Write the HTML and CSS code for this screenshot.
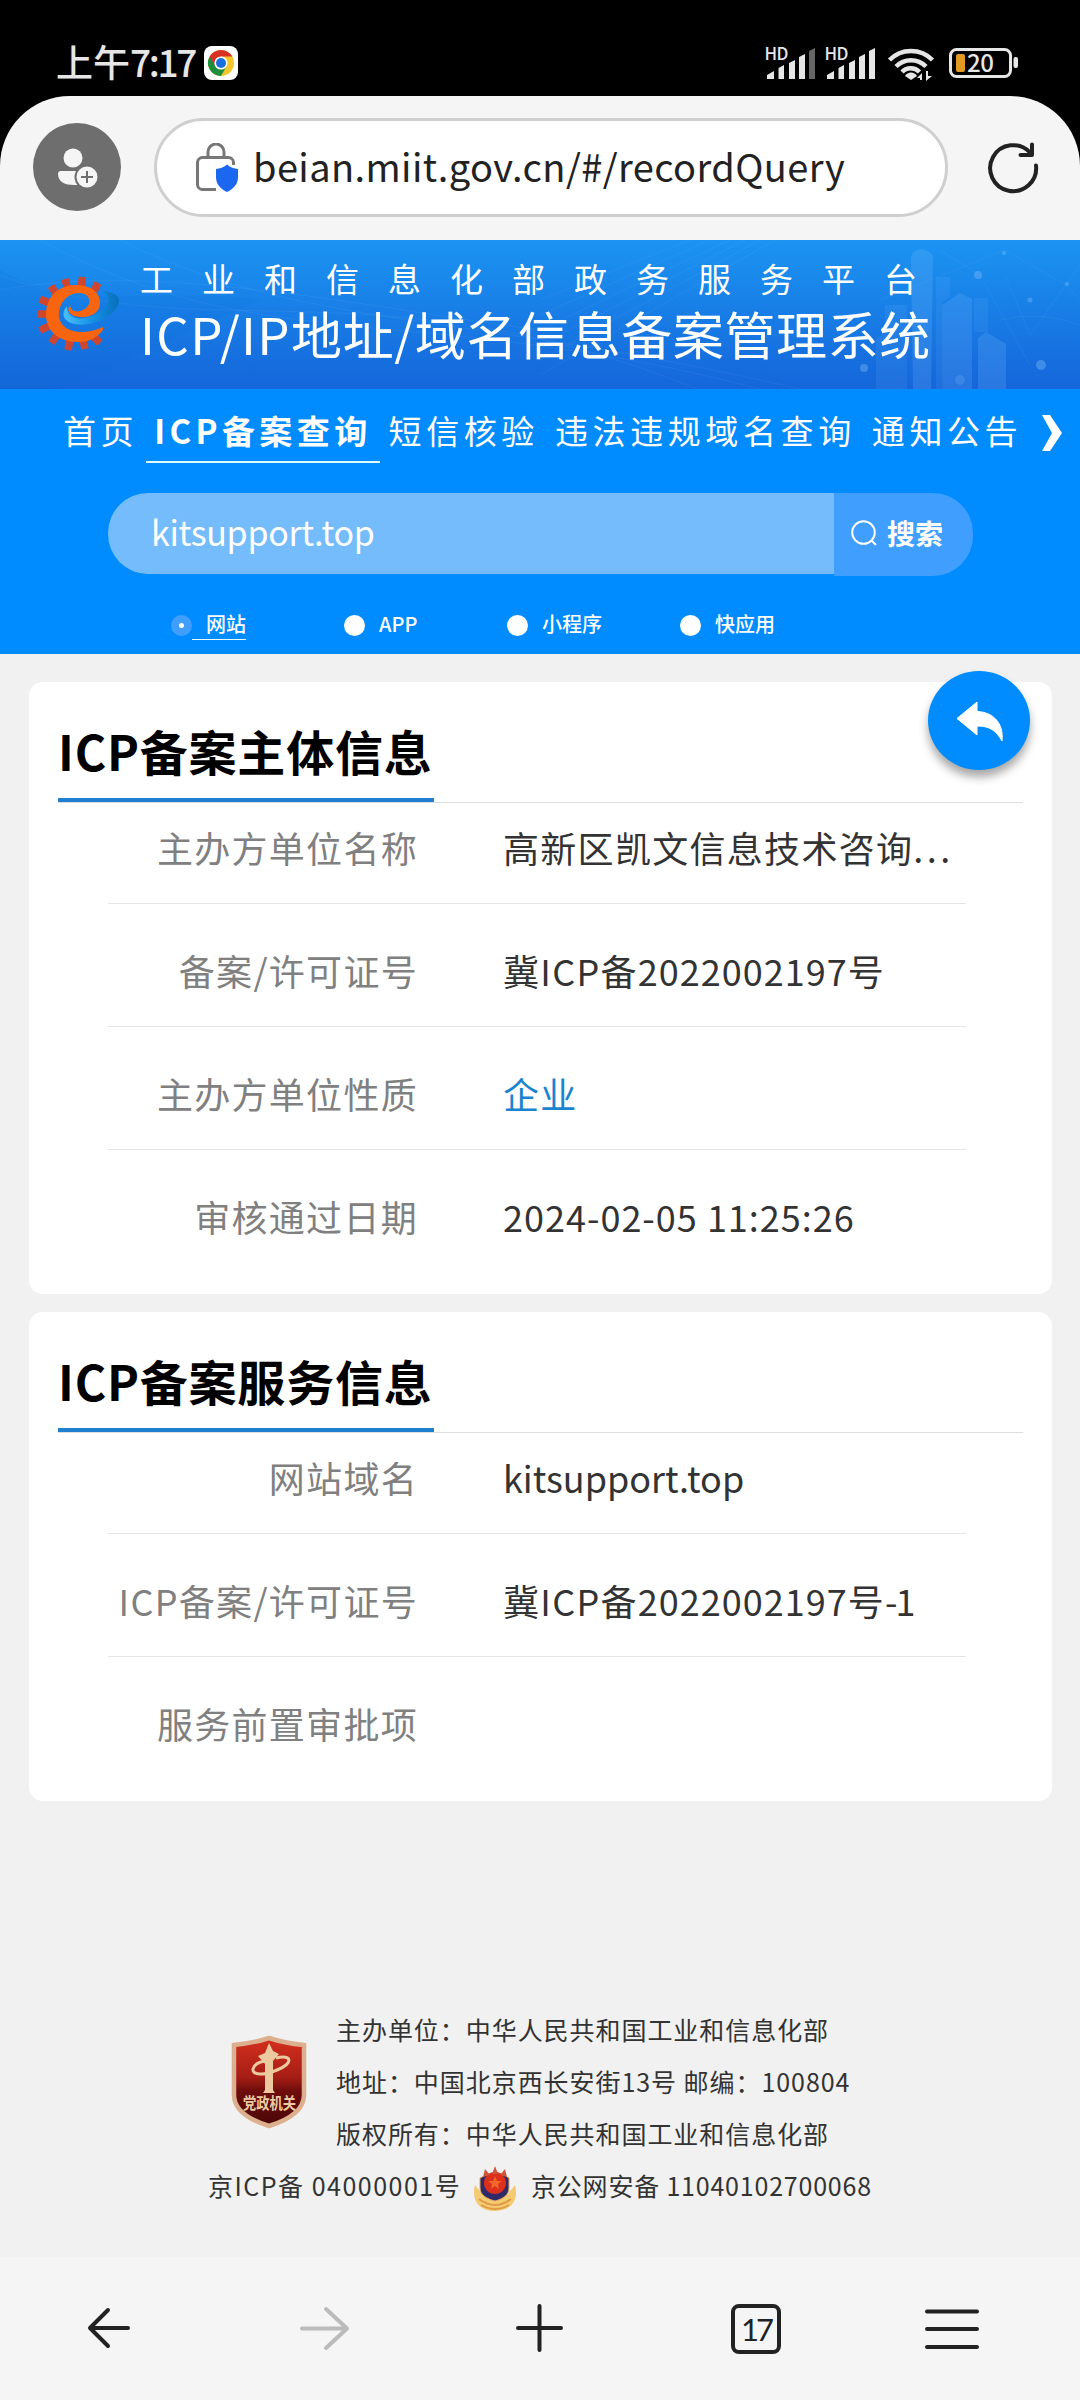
FILE: index.html
```
<!DOCTYPE html>
<html lang="zh-CN">
<head>
    <meta charset="UTF-8">
    <meta name="viewport" content="width=device-width, initial-scale=1.0">
    <title>ICP/IP地址/域名信息备案管理系统</title>
    <link rel="stylesheet" href="styles.css">
</head>
<body>
    <!-- Phone status bar -->
    <div class="status-bar">
        <span class="clock">上午<span class="clock-num">7:17</span></span>
        <svg class="chrome" width="34" height="34" viewBox="0 0 34 34">
            <rect width="34" height="34" rx="8" fill="#fff"/>
            <circle cx="17" cy="17" r="13" fill="#f5c52c"/>
            <path d="M17 17 L5.7 10.5 A13 13 0 0 0 17 30 L22.6 20.2z" fill="#1e8e3e"/>
            <path d="M17 17 L11.4 20.2 L5.7 10.5 A13 13 0 0 1 28.3 10.5 H17z" fill="#d93025"/>
            <circle cx="17" cy="17" r="6.6" fill="#fff"/>
            <circle cx="17" cy="17" r="5" fill="#1a6fe0"/>
        </svg>
        <svg class="status-icons" width="260" height="60" viewBox="760 33 260 60">
            <g fill="#e6e6e6">
                <text class="hd" x="764.5" y="59.5" textLength="24">HD</text>
                <path d="M767 79v-4l7-4v8zM778.500 79V68l5.500-3v14zM789 79V63l6-3v19zM799 79V57l6-3v25z"/>
                <path d="M809 79V51l6-3v31z" fill="#666"/>
                <text class="hd" x="824.5" y="59.5" textLength="24">HD</text>
                <path d="M827 79v-4l7-4v8zM838.500 79V68l5.500-3v14zM849 79V63l6-3v19zM859 79V57l6-3v25zM869 79V51l6-3v31z"/>
                <path d="M905 76l6 4 6-4a7 7 0 0 0-12 0z"/>
                <path d="M922 73l-5 5h3v2h2zM926 81V71h2v5h4z"/>
                <rect x="1013.500" y="57" width="4.500" height="11" rx="2"/>
                <text class="battery-num" x="967" y="72" textLength="27">20</text>
            </g>
            <g fill="none" stroke="#e6e6e6" stroke-width="4.500">
                <path d="M889.500 60a30 30 0 0 1 43 0M896 66.500a21 21 0 0 1 30 0M902 72a12 12 0 0 1 17.500 0"/>
                <rect x="950.500" y="49.500" width="60" height="27" rx="6" stroke-width="3"/>
            </g>
            <rect x="956" y="54" width="9" height="18" rx="2" fill="#e39a22"/>
        </svg>
    </div>

    <!-- Browser toolbar -->
    <div class="toolbar-wrap">
        <div class="toolbar">
            <svg class="avatar" width="88" height="88" viewBox="0 0 88 88">
                <circle cx="44" cy="44" r="44" fill="#6e6e6e"/>
                <circle cx="40" cy="35" r="9.500" fill="#f5f5f5"/>
                <path d="M25 51q0-3 3-3h24v14h-11c-9 0-16-3-16-11z" fill="#f5f5f5"/>
                <circle cx="54" cy="54" r="11.500" fill="#f5f5f5" stroke="#6e6e6e" stroke-width="2"/>
                <path d="M54 48v12M48 54h12" stroke="#6e6e6e" stroke-width="2"/>
            </svg>
            <div class="url-box">
                <svg width="44" height="50" viewBox="0 0 44 50">
                    <path d="M37.500 22v-2.500a5 5 0 0 0-5-5H6.500a5 5 0 0 0-5 5v22a5 5 0 0 0 5 5H20M12 14v-5a8 8 0 0 1 16 0v5" fill="none" stroke="#777" stroke-width="3"/>
                    <path d="M31 21.500c3.500 3 7 4 11 4.500v8c0 7-4 11.500-11 15-7-3.500-11-8-11-15v-8c4-.5 7.500-1.500 11-4.500z" fill="#1c67f0"/>
                </svg>
                <span class="url">beian.miit.gov.cn/#/recordQuery</span>
            </div>
            <svg class="reload" width="54" height="54" viewBox="0 0 54 54">
                <path d="M49 24.500A23 23 0 1 1 43 11.500M45 3.500V14H33.500" fill="none" stroke="#222" stroke-width="4" stroke-linecap="round" stroke-linejoin="round"/>
            </svg>
        </div>
    </div>

    <!-- Site header -->
    <div class="site-header">
        <svg class="header-bg" width="1080" height="149" viewBox="0 0 1080 149">
            <g fill="none" stroke="#fff" stroke-opacity=".05">
                <path d="M0 35C200 110 380 20 700 150M40 0C260 120 420 60 760 149M120 0C300 90 460 70 800 149M0 50C160 20 380 70 540 90"/>
                <path d="M540 60L690 0M540 75L710 0M540 90L730 0M540 105L745 0M540 120L760 0M540 135L775 0"/>
                <path d="M880 60L1005 10 1066 45 1080 60M1005 35l25 60 50-70M940 10l40 25 50 90M1000 80q40-10 80 5"/>
            </g>
            <path d="M0 30C80 75 160 45 260 60L60 149H0z" fill="#0b6ad8" opacity=".12"/>
            <g fill="#8cc5ff">
                <path d="M911 18q0-8 11-9 11 3 11 9l-2 131h-18z" opacity=".18"/>
                <path d="M942 65l18-12 12 6v90h-30z" opacity=".17"/>
                <path d="M978 98l8-6 20 12v45h-28z" opacity=".18"/>
                <path d="M885 65h22v84h-31v-50l9-6z" opacity=".1"/>
                <path d="M936 37h14v20l-8 5v87h-6zM974 58h14v34h-14z" opacity=".1"/>
                <g opacity=".35">
                    <circle cx="864" cy="128" r="4"/>
                    <circle cx="978" cy="35" r="4"/>
                    <circle cx="1041" cy="125" r="5"/>
                    <circle cx="1004" cy="13" r="2"/>
                    <circle cx="1030" cy="60" r="2.500"/>
                    <circle cx="1067" cy="44" r="2"/>
                    <circle cx="960" cy="140" r="5" opacity=".5"/>
                </g>
            </g>
        </svg>
        <svg class="logo" width="86" height="78" viewBox="0 0 86 78">
            <defs>
                <linearGradient id="swoosh" x1="0" y1="0" x2="1" y2="0">
                    <stop offset="0" stop-color="#4cc0fa"/>
                    <stop offset=".5" stop-color="#1591e6"/>
                    <stop offset="1" stop-color="#0670bd"/>
                </linearGradient>
            </defs>
            <path d="M58 16L62 8M45 14L46.500 2M32 15L29 4M21 20L15 11M13 28L4 24M11 39H2M13 51L4 55.500M21 60L15.500 68M34 65L32 75M47 65L49 74M57 61L64 68" stroke="#cf4630" stroke-width="7.500"/>
            <path d="M67 16C86 18 87 28 76 38 64 49 46 52 35 48 27 45 25 38 31 31 31 45 46 46 58 40 72 34 77 25 67 16z" fill="url(#swoosh)"/>
            <path d="M67 55C60 64 52 67 42 67 22 67 10 55 10 40 10 22 22 10 40 10 56 10 64 18 64 28 64 38 54 43 43 42 34 41 30 36 34 30 35 38 44 38 50 33 57 27 53 18 43 18 30 18 22 30 23 42 25 56 45 62 67 52z" fill="#f8650e"/>
        </svg>
        <div class="titles">
            <div class="title-small">工业和信息化部政务服务平台</div>
            <div class="title-big"><span class="title-latin">ICP/IP</span>地址/域名信息备案管理系统</div>
        </div>
    </div>

    <!-- Nav and search -->
    <div class="nav-area">
        <div class="nav">
            <span class="nav-item">首页</span>
            <span class="nav-item active">ICP备案查询</span>
            <span class="nav-item">短信核验</span>
            <span class="nav-item">违法违规域名查询</span>
            <span class="nav-item">通知公告</span>
            <svg class="chevron" width="22" height="36" viewBox="0 0 22 36">
                <path d="M1 0h8l12 18L9 36H1l10-18z" fill="#fff"/>
            </svg>
        </div>
        <div class="search">
            <div class="search-input">kitsupport.top</div>
            <div class="search-btn">
                <svg width="26" height="26" viewBox="0 0 26 26" fill="none" stroke="#fff" stroke-width="2">
                    <circle cx="12.500" cy="12.500" r="11.300"/><path d="M20 20l5 5"/>
                </svg>
                <span>搜索</span>
            </div>
        </div>
        <div class="types">
            <div class="type on"><i></i><span>网站</span></div>
            <div class="type type-app"><i></i><span>APP</span></div>
            <div class="type"><i></i><span>小程序</span></div>
            <div class="type"><i></i><span>快应用</span></div>
        </div>
    </div>

    <!-- Results -->
    <div class="content">
        <div class="card card-main">
            <div class="back-btn">
                <svg width="48" height="42" viewBox="0 0 48 42">
                    <path d="M21 1v9.500C37 11 48 22 46 40 40 29 33 25 21 25v9L1 17.500z" fill="#fff" stroke="#fff" stroke-linejoin="round"/>
                </svg>
            </div>
            <div class="card-head"><h2>ICP备案主体信息</h2></div>
            <div class="rows">
                <div class="row"><span class="label">主办方单位名称</span><span class="value">高新区凯文信息技术咨询<span class="dots">...</span></span></div>
                <div class="row"><span class="label">备案/许可证号</span><span class="value">冀ICP备<span class="num">2022002197</span>号</span></div>
                <div class="row"><span class="label">主办方单位性质</span><span class="value link">企业</span></div>
                <div class="row"><span class="label">审核通过日期</span><span class="value num">2024-02-05 11:25:26</span></div>
            </div>
        </div>
        <div class="card card-service">
            <div class="card-head"><h2>ICP备案服务信息</h2></div>
            <div class="rows">
                <div class="row"><span class="label">网站域名</span><span class="value domain">kitsupport.top</span></div>
                <div class="row"><span class="label">ICP备案/许可证号</span><span class="value">冀ICP备<span class="num">2022002197</span>号<span class="suffix">-1</span></span></div>
                <div class="row"><span class="label">服务前置审批项</span><span class="value"></span></div>
            </div>
        </div>
    </div>

    <!-- Footer -->
    <div class="footer">
        <div class="footer-top">
            <svg class="badge" width="76" height="94" viewBox="0 0 76 94">
                <defs>
                    <linearGradient id="red" x1="0" y1="0" x2="0" y2="1">
                        <stop offset="0" stop-color="#d5301f"/>
                        <stop offset=".45" stop-color="#a51d15"/>
                        <stop offset=".6" stop-color="#6e0d0c"/>
                        <stop offset="1" stop-color="#4a0606"/>
                    </linearGradient>
                </defs>
                <path d="M3 10q20-2 35-7 15 5 35 7v50q0 20-35 31Q3 80 3 60z" fill="url(#red)" stroke="#dcb08e" stroke-width="4.500"/>
                <path d="M34 55V29l-7-8 7-3 4-10 4 8 6 3-6 7v29l2 3H32z" fill="#edc9a0"/>
                <path d="M45 23c16-4 18 5 1 12-14 6-25 5-24-1 1-4 6-7 12-8" fill="none" stroke="#edc9a0" stroke-width="3"/>
                <text class="badge-text" x="12" y="74" textLength="53" lengthAdjust="spacingAndGlyphs">党政机关</text>
            </svg>
            <div class="footer-lines">
                <div>主办单位：中华人民共和国工业和信息化部</div>
                <div>地址：中国北京西长安街13号 邮编：100804</div>
                <div>版权所有：中华人民共和国工业和信息化部</div>
            </div>
        </div>
        <div class="footer-record">
            <span class="rec-icp">京ICP备 04000001号</span>
            <svg class="police" width="46" height="48" viewBox="0 0 46 48">
                <path d="M3 20C-1 34 6 46 23 46s24-12 20-26l-8 10H11z" fill="#f3cb72"/>
                <path d="M7 34q16 12 32 0M9 40q14 8 28 0" fill="none" stroke="#e09a45" stroke-width="2"/>
                <path d="M23 7l9 3 5 3v10c0 7-6 11-14 13C15 34 8 30 8 23V13l6-3z" fill="#302a68" stroke="#e6a55b"/>
                <circle cx="23" cy="18" r="11" fill="#dc2f1c"/>
                <path d="M23 1l3 8h-6zM13 4l5 6-7 2zM33 4l-5 6 7 2z" fill="#d0563c"/>
                <path d="M23 11l2 5h5l-4 3 1 5-4-3-4 3 1-5-4-3h5z" fill="#f3672b"/>
            </svg>
            <span class="rec-police">京公网安备 11040102700068</span>
        </div>
    </div>

    <!-- Browser bottom bar -->
    <div class="bottom-bar">
        <svg width="1080" height="143" viewBox="0 0 1080 143" fill="none" stroke="#222" stroke-width="4" stroke-linecap="round" stroke-linejoin="round">
            <path d="M128 71H91M108 53L90 71l18 18"/>
            <path d="M302 71.500h45M326 52l21 19.500L326 91" stroke="#bbb"/>
            <path d="M539.500 49v44M518 71h43"/>
            <rect x="733" y="49" width="46" height="46" rx="6"/>
            <path d="M927 54.500h50M927 72h50M927 90h50"/>
            <text class="tab-count" x="756" y="84" text-anchor="middle" stroke="none" fill="#222">17</text>
        </svg>
    </div>
</body>
</html>
```
FILE: styles.css
```
* {
    margin: 0;
    padding: 0;
    box-sizing: border-box;
}

body {
    width: 1080px;
    height: 2400px;
    display: flex;
    flex-direction: column;
    background-color: #f1f1f1;
    font-family: "Noto Sans CJK SC", "Noto Sans", sans-serif;
    overflow: hidden;
}

svg {
    display: block;
    flex-shrink: 0;
}

/* Status bar */
.status-bar {
    height: 96px;
    display: flex;
    align-items: flex-start;
    background-color: #000;
    padding: 33px 60px 0 56px;
}

.clock {
    width: 148px;
    margin-top: 8px;
    font-size: 37px;
    line-height: 40px;
    font-weight: 500;
    color: #e6e6e6;
    white-space: nowrap;
}

.clock-num {
    letter-spacing: -2.3px;
}

.chrome {
    margin-top: 13px;
}

.status-icons {
    margin-left: auto;
}

.hd {
    font-size: 17px;
    font-weight: 500;
}

.battery-num {
    font-size: 24px;
    font-weight: 500;
}

/* Toolbar */
.toolbar-wrap {
    background-color: #000;
}

.toolbar {
    height: 144px;
    display: flex;
    align-items: flex-start;
    background-color: #f5f5f5;
    border-radius: 70px 70px 0 0;
    padding: 22px 0 0 33px;
}

.avatar {
    margin-top: 5px;
}

.url-box {
    width: 794px;
    height: 99px;
    margin-left: 33px;
    display: flex;
    align-items: center;
    background-color: #fff;
    border: 3px solid #cfcfcf;
    border-radius: 50px;
    padding-left: 39px;
}

.url {
    margin: -3px 0 0 13px;
    font-size: 38px;
    line-height: 50px;
    letter-spacing: 0.4px;
    color: #222;
    white-space: nowrap;
}

.reload {
    margin: 23px 0 0 39px;
}

/* Header banner */
.site-header {
    position: relative;
    height: 149px;
    display: flex;
    background: linear-gradient(#1b94f2, #1566da);
    color: #fff;
}

.header-bg {
    position: absolute;
    top: 0;
    left: 0;
}

.logo {
    position: relative;
    margin: 35px 0 0 36px;
}

.titles {
    position: relative;
    margin-left: 18px;
    white-space: nowrap;
}

.title-small {
    margin-top: 15px;
    font-size: 33px;
    line-height: 46px;
    letter-spacing: 29px;
}

.title-big {
    margin-top: 1px;
    font-size: 51px;
    line-height: 62px;
    letter-spacing: 0.6px;
}

.title-latin {
    letter-spacing: 1.4px;
}

/* Nav */
.nav-area {
    height: 265px;
    background-color: #008cff;
    color: #fff;
}

.nav {
    height: 75px;
    display: flex;
    padding: 16px 0 0 55px;
    white-space: nowrap;
}

.nav-item {
    height: 58px;
    padding: 0 8px;
    font-size: 33px;
    line-height: 50px;
    letter-spacing: 4.6px;
}

.nav-item.active {
    margin-right: 1px;
    font-weight: 700;
    letter-spacing: 4.4px;
    border-bottom: 2px solid #dffcff;
}

.chevron {
    margin: 10px 0 0 11px;
}

/* Search */
.search {
    display: flex;
    margin: 29px 0 0 108px;
}

.search-input {
    width: 726px;
    height: 81px;
    padding-left: 43px;
    font-size: 34px;
    line-height: 77px;
    letter-spacing: -0.3px;
    background-color: #74bcfb;
    border-radius: 40px 0 0 40px;
}

.search-btn {
    width: 139px;
    height: 83px;
    display: flex;
    align-items: center;
    padding: 0 0 3px 17px;
    gap: 10px;
    font-size: 28px;
    font-weight: 700;
    background-color: #409eff;
    border-radius: 0 40px 40px 0;
}

.types {
    display: flex;
    margin: 34px 0 0 171px;
    font-size: 20px;
    font-weight: 500;
}

.type {
    display: flex;
    align-items: center;
    width: 173px;
    height: 30px;
}

.type i {
    width: 21px;
    height: 21px;
    border-radius: 50%;
    background-color: #fff;
}

.type span {
    height: 30px;
    line-height: 28px;
    padding-left: 14px;
}

.type.on i {
    border: 8px solid #409eff;
}

.type.on span {
    border-bottom: 1px solid #e8ffff;
}

.type-app {
    width: 163px;
}

/* Cards */
.content {
    padding: 28px 28px 0 29px;
}

.card {
    position: relative;
    background-color: #fff;
    border-radius: 14px;
    padding: 34px 29px 0;
}

.card-main {
    height: 612px;
    margin-bottom: 18px;
}

.card-service {
    height: 489px;
}

.back-btn {
    position: absolute;
    top: -11px;
    right: 22px;
    width: 102px;
    height: 99px;
    padding: 30px 0 0 28px;
    border-radius: 50%;
    background-color: #008cff;
    box-shadow: 0 7px 10px rgba(0, 0, 0, 0.35);
}

.card-head {
    height: 87px;
    display: flex;
    border-bottom: 1px solid #ddd;
}

.card-head h2 {
    width: 376px;
    height: 86px;
    font-size: 48px;
    line-height: 69px;
    font-weight: 700;
    letter-spacing: 0.8px;
    white-space: nowrap;
    color: #000;
    border-bottom: 4px solid #2080d0;
}

.rows {
    padding: 0 57px 0 50px;
}

.row {
    display: flex;
    height: 123px;
    padding-top: 41px;
    font-size: 36px;
    line-height: 50px;
    letter-spacing: 1.3px;
    white-space: nowrap;
    border-bottom: 1px solid #e5e5e5;
}

.row:first-child {
    height: 101px;
    padding-top: 19px;
}

.row:last-child {
    border-bottom: none;
}

.label {
    width: 310px;
    text-align: right;
    color: #808080;
}

.value {
    margin-left: 85px;
    color: #333;
}

.num {
    letter-spacing: 1px;
}

.suffix {
    letter-spacing: -2px;
}

.domain {
    letter-spacing: 0;
}

.dots {
    letter-spacing: 3.5px;
}

.link {
    color: #1a84d0;
}

/* Footer */
.footer {
    margin-top: 202px;
    font-size: 25px;
    line-height: 52px;
    letter-spacing: 0.95px;
    color: #333;
    white-space: nowrap;
}

.footer-top {
    display: flex;
    padding-left: 231px;
}

.badge {
    margin-top: 32px;
}

.badge-text {
    font-size: 16px;
    font-weight: 700;
    fill: #edc9a0;
    letter-spacing: 0;
}

.footer-lines {
    margin-left: 29px;
}

.footer-record {
    display: flex;
    padding-left: 208px;
}

.rec-icp {
    width: 264px;
    letter-spacing: 1.5px;
}

.police {
    margin-top: 6px;
}

.rec-police {
    margin-left: 13px;
    letter-spacing: 0.8px;
}

/* Bottom bar */
.bottom-bar {
    margin-top: auto;
    height: 143px;
    background-color: #f5f5f5;
}

.tab-count {
    font-family: Lato, sans-serif;
    font-size: 31px;
    letter-spacing: -3px;
}
```
